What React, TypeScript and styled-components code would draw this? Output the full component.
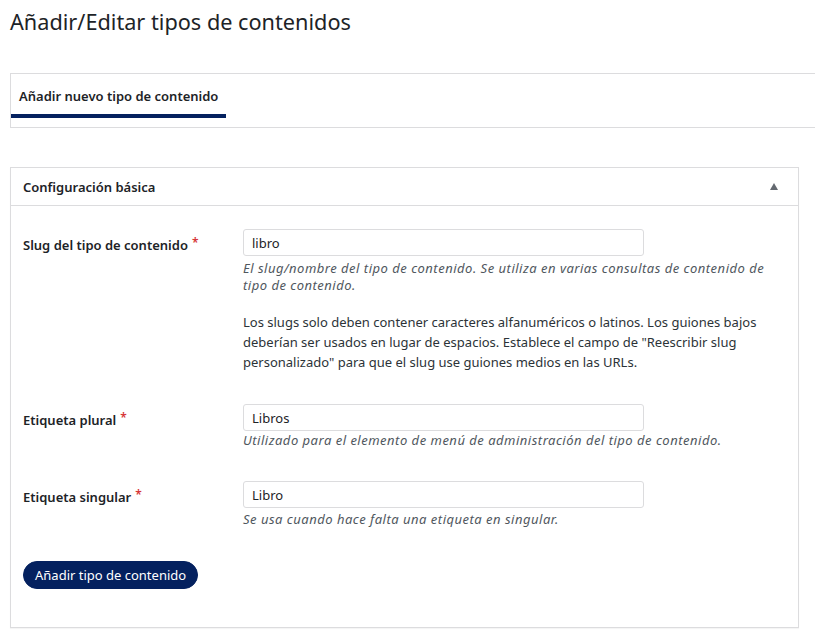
import { FC } from 'react';
import styled, { createGlobalStyle } from 'styled-components';

const FONT = `"Noto Sans", "Open Sans", Arial, sans-serif`;
const NAVY = '#04215f';

const GlobalStyle = createGlobalStyle`
  html, body {
    margin: 0;
    padding: 0;
    background: #ffffff;
  }
  body {
    font-family: ${FONT};
    font-size: 13px;
    color: #1d2327;
    overflow: hidden;
  }
`;

const SPage = styled.div`
  width: 815px;
  height: 641px;
  overflow: hidden;
  padding-left: 10px;
  box-sizing: border-box;
`;

const STitle = styled.h1`
  margin: 0;
  padding: 7px 0 0 0;
  font-size: 21.7px;
  font-weight: 400;
  line-height: 29px;
  color: #1d2327;
`;

const STabBox = styled.div`
  margin-top: 37px;
  width: 830px;
  height: 55px;
  box-sizing: border-box;
  border: 1px solid #dcdcde;
  display: flex;
  align-items: stretch;
`;

const STab = styled.div`
  display: flex;
  align-items: center;
  padding: 4px 8px 0 8px;
  font-size: 13px;
  font-weight: 600;
  border-bottom: 4px solid ${NAVY};
  margin-bottom: 9px;
`;

const SPanel = styled.section`
  margin-top: 39px;
  width: 789px;
  height: 461px;
  box-sizing: border-box;
  border: 1px solid #dcdcde;
  box-shadow: 0 1px 1px rgba(0, 0, 0, 0.04);
`;

const SPanelHeader = styled.div`
  height: 38px;
  box-sizing: border-box;
  display: flex;
  align-items: center;
  justify-content: space-between;
  padding: 0 20px 0 12px;
  border-bottom: 1px solid #dcdcde;
  font-size: 13px;
  font-weight: 600;
`;

const SToggle = styled.span`
  width: 0;
  height: 0;
  border-left: 4px solid transparent;
  border-right: 4px solid transparent;
  border-bottom: 7px solid #646970;
`;

const SPanelBody = styled.div`
  padding: 23px 12px 0 12px;
`;

const SRow = styled.div`
  display: grid;
  grid-template-columns: 220px 1fr;
  margin-bottom: 32px;
`;

const SLabel = styled.label`
  padding-top: 5px;
  font-size: 13px;
  font-weight: 600;
  line-height: 18px;
`;

const SRequired = styled.span`
  color: #d63638;
  margin-left: 4px;
  vertical-align: 3px;
  font-size: 12px;
`;

const SInput = styled.input`
  display: block;
  width: 401px;
  height: 27px;
  box-sizing: border-box;
  border: 1px solid #dcdcde;
  border-radius: 3px;
  padding: 0 8px;
  font-family: ${FONT};
  font-size: 13px;
  color: #1d2327;
  background: #fff;
  outline: none;
`;

const SDescription = styled.p<{ gap: number }>`
  margin: ${({ gap }) => gap}px 0 0 0;
  font-style: italic;
  font-size: 13px;
  letter-spacing: 0.5px;
  line-height: 17px;
  color: #50575e;
  max-width: 540px;
`;

const SNote = styled.p`
  margin: 18px 0 0 0;
  font-size: 13px;
  line-height: 20px;
  color: #2c3338;
  max-width: 530px;
`;

const SButton = styled.button`
  margin-top: 1px;
  height: 28px;
  padding: 0 11px;
  border: 1px solid ${NAVY};
  border-radius: 14px;
  background: ${NAVY};
  color: #fff;
  font-family: ${FONT};
  font-size: 13px;
  cursor: pointer;
`;

interface IField {
  label: string;
  value: string;
  description: string;
  gap: number;
  note?: string;
}

const fields: IField[] = [
  {
    label: 'Slug del tipo de contenido',
    value: 'libro',
    description:
      'El slug/nombre del tipo de contenido. Se utiliza en varias consultas de contenido de tipo de contenido.',
    gap: 4,
    note: 'Los slugs solo deben contener caracteres alfanuméricos o latinos. Los guiones bajos deberían ser usados en lugar de espacios. Establece el campo de "Reescribir slug personalizado" para que el slug use guiones medios en las URLs.',
  },
  {
    label: 'Etiqueta plural',
    value: 'Libros',
    description:
      'Utilizado para el elemento de menú de administración del tipo de contenido.',
    gap: 1,
  },
  {
    label: 'Etiqueta singular',
    value: 'Libro',
    description: 'Se usa cuando hace falta una etiqueta en singular.',
    gap: 3,
  },
];

const Field: FC<IField> = ({ label, value, description, gap, note }) => (
  <SRow>
    <SLabel>
      {label}
      <SRequired>*</SRequired>
    </SLabel>
    <div>
      <SInput defaultValue={value} />
      <SDescription gap={gap}>{description}</SDescription>
      {note && <SNote>{note}</SNote>}
    </div>
  </SRow>
);

const App: FC = () => {
  return (
    <SPage>
      <GlobalStyle />
      <STitle>Añadir/Editar tipos de contenidos</STitle>
      <STabBox>
        <STab>Añadir nuevo tipo de contenido</STab>
      </STabBox>
      <SPanel>
        <SPanelHeader>
          <span>Configuración básica</span>
          <SToggle />
        </SPanelHeader>
        <SPanelBody>
          {fields.map((f) => (
            <Field key={f.label} {...f} />
          ))}
          <SButton>Añadir tipo de contenido</SButton>
        </SPanelBody>
      </SPanel>
    </SPage>
  );
};

export default App;
